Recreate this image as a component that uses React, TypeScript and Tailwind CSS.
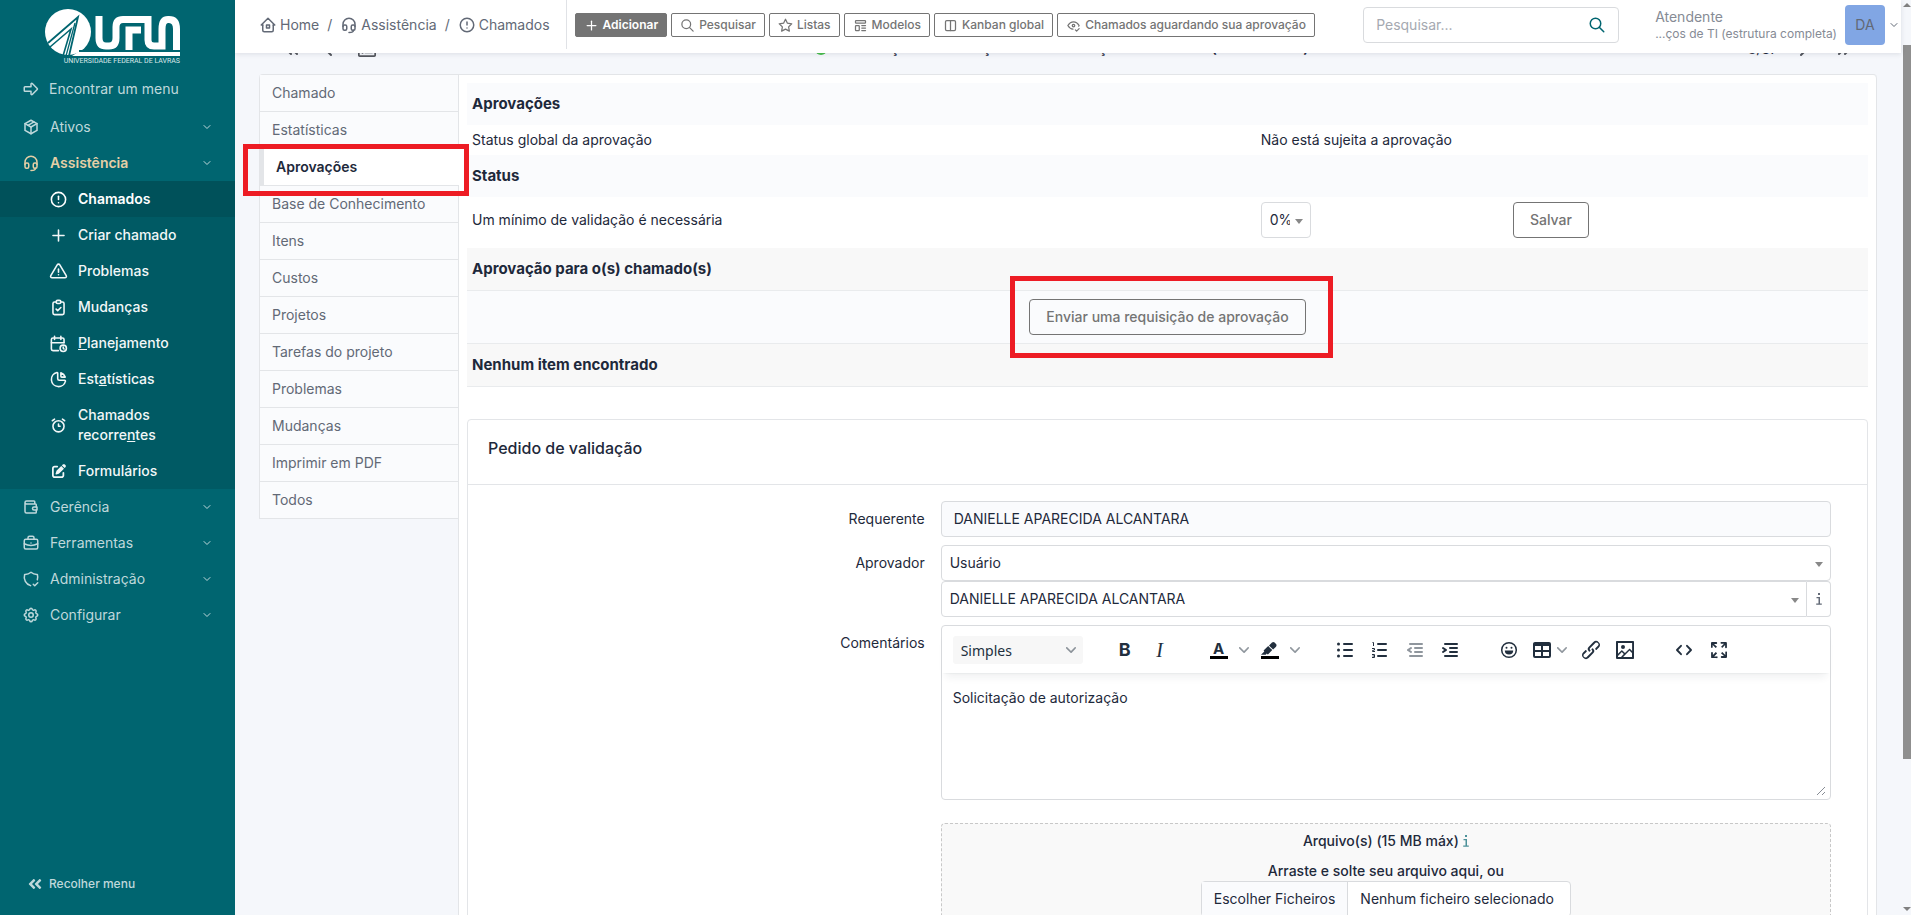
import React from 'react';
import {
  TbAlarm,
  TbAlertCircle,
  TbAlertTriangle,
  TbArrowBigRight,
  TbBriefcase,
  TbCalendarTime,
  TbChartPie,
  TbChevronDown,
  TbChevronLeft,
  TbChevronRight,
  TbChevronsLeft,
  TbChevronsRight,
  TbClipboardCheck,
  TbEyeCheck,
  TbHeadset,
  TbHome2,
  TbLayoutColumns,
  TbPackage,
  TbPlus,
  TbSearch,
  TbSettings,
  TbShieldCheck,
  TbStar,
  TbTemplate,
  TbWallet,
} from 'react-icons/tb';
import { FaAngleDoubleLeft, FaRegListAlt } from 'react-icons/fa';
import { FaPenToSquare } from 'react-icons/fa6';
import { clsx } from 'clsx';

type IconType = React.ComponentType<{ className?: string }>;

function FormsIcon({ className }: { className?: string }) {
  return (
    <span className={clsx('grid place-items-center', className)}>
      <FaPenToSquare className="size-[14px]" />
    </span>
  );
}

const subMenu: { icon: IconType; label: React.ReactNode; active?: boolean }[] = [
  { icon: TbAlertCircle, label: 'Chamados', active: true },
  { icon: TbPlus, label: 'Criar chamado' },
  { icon: TbAlertTriangle, label: 'Problemas' },
  { icon: TbClipboardCheck, label: 'Mudanças' },
  { icon: TbCalendarTime, label: <><u>P</u>lanejamento</> },
  { icon: TbChartPie, label: <>Est<u>a</u>tísticas</> },
  { icon: TbAlarm, label: <>Chamados recorre<u>n</u>tes</> },
  { icon: FormsIcon, label: 'Formulários' },
];

const lowerMenu: { icon: IconType; label: string }[] = [
  { icon: TbWallet, label: 'Gerência' },
  { icon: TbBriefcase, label: 'Ferramentas' },
  { icon: TbShieldCheck, label: 'Administração' },
  { icon: TbSettings, label: 'Configurar' },
];

const headerActions: { icon: IconType; label: string; primary?: boolean }[] = [
  { icon: TbPlus, label: 'Adicionar', primary: true },
  { icon: TbSearch, label: 'Pesquisar' },
  { icon: TbStar, label: 'Listas' },
  { icon: TbTemplate, label: 'Modelos' },
  { icon: TbLayoutColumns, label: 'Kanban global' },
  { icon: TbEyeCheck, label: 'Chamados aguardando sua aprovação' },
];

const tabs = [
  'Chamado',
  'Estatísticas',
  'Aprovações',
  'Base de Conhecimento',
  'Itens',
  'Custos',
  'Projetos',
  'Tarefas do projeto',
  'Problemas',
  'Mudanças',
  'Imprimir em PDF',
  'Todos',
];

function Logo() {
  return (
    <div className="flex flex-col items-end w-[135px] ml-[45px]">
      <svg viewBox="0 0 135 47" className="w-[135px] h-[47px]" fill="none" aria-hidden="true">
        <circle cx="23" cy="23" r="23" fill="#fff" />
        <path d="M33 43H135V47H27Z" fill="#fff" />
        <path d="M34 42H135" stroke="#006570" strokeWidth="2" />
        <path d="M3 34L33 8L24 47" stroke="#006570" strokeWidth="1.8" />
        <path d="M5 38L26 20L18 47" stroke="#006570" strokeWidth="1.6" />
        <path d="M30 14L21 47" stroke="#006570" strokeWidth="1.3" />
        <g stroke="#fff" strokeWidth="7">
          <path d="M54 7V29Q54 37 61 37H64Q71 37 71 29V18Q71 10.500 78 10.500H103V31Q103 37 109 37H117V20Q117 10.500 123 10.500H124Q131.500 10.500 131.500 20V41" />
          <path d="M84 41V21H96" />
        </g>
      </svg>
      <span className="text-[7px] leading-[10px] text-[#d9e8ea] font-['Roboto'] whitespace-nowrap">
        UNIVERSIDADE FEDERAL DE LAVRAS
      </span>
    </div>
  );
}

function MenuLink({ icon: Icon, label, active }: { icon: IconType; label: string; active?: boolean }) {
  return (
    <a
      href="#"
      className={clsx(
        'flex items-center h-9 px-[22px]',
        active ? 'text-[#e5cfa6] font-semibold' : 'text-[#bfd8db]'
      )}
    >
      <Icon className="size-[18px] mr-[10px]" />
      <span className="flex-1">{label}</span>
      <TbChevronDown className="size-3 text-[#bfd8db]" />
    </a>
  );
}

function Sidebar() {
  return (
    <aside className="w-[235px] shrink-0 flex flex-col bg-[#006570] pt-[9px]">
      <Logo />
      <a href="#" className="flex items-center h-9 mt-[5px] pl-[22px] text-[#bfd8db]">
        <TbArrowBigRight className="size-[18px] mr-[9px]" />
        Encontrar um menu
      </a>
      <nav className="mt-[2px]">
        <MenuLink icon={TbPackage} label="Ativos" />
        <MenuLink icon={TbHeadset} label="Assistência" active />
        <ul className="bg-[#005a64] text-[#f2f7f8] font-medium">
          {subMenu.map(({ icon: Icon, label, active }, index) => (
            <li key={index}>
              <a
                href="#"
                className={clsx(
                  'flex items-center min-h-9 py-2 pl-[49px] pr-14 leading-5',
                  active && 'bg-[#00515a] font-semibold text-white'
                )}
              >
                <Icon className="size-[19px] shrink-0 mr-[10px]" />
                <span>{label}</span>
              </a>
            </li>
          ))}
        </ul>
        {lowerMenu.map((item) => (
          <MenuLink key={item.label} icon={item.icon} label={item.label} />
        ))}
      </nav>
      <button className="flex items-center mt-auto mb-[23px] pl-[27px] text-xs font-medium text-[#bfd8db]">
        <FaAngleDoubleLeft className="size-4 mr-[6px]" />
        Recolher menu
      </button>
    </aside>
  );
}

function Header() {
  return (
    <header className="relative z-10 h-[53px] shrink-0 flex items-center bg-white pl-6 pb-[3px] text-[#626976] shadow-[0_1px_5px_rgba(30,41,59,0.12)]">
      <nav className="flex items-center gap-2">
        <a href="#" className="flex items-center gap-[3px]">
          <TbHome2 className="size-[18px]" /> Home
        </a>
        <span>/</span>
        <a href="#" className="flex items-center gap-[3px]">
          <TbHeadset className="size-[18px]" /> Assistência
        </a>
        <span>/</span>
        <a href="#" className="flex items-center gap-[3px]">
          <TbAlertCircle className="size-[18px]" /> Chamados
        </a>
      </nav>
      <div className="self-start h-[49px] w-px bg-[#e0e2e6] ml-4 mr-2" />
      <div className="flex items-center gap-1">
        {headerActions.map(({ icon: Icon, label, primary }) => (
          <button
            key={label}
            className={clsx(
              'flex items-center gap-1 h-6 px-2 rounded-[2px] border border-[#747474] text-xs whitespace-nowrap',
              primary ? 'bg-[#747474] text-white font-semibold' : 'text-[#747474] font-medium'
            )}
          >
            <Icon className="size-[15px]" />
            {label}
          </button>
        ))}
      </div>
      <div className="ml-auto mr-9 flex items-center w-64 h-9 px-3 rounded border border-[#d9dbde]">
        <input
          type="search"
          aria-label="Pesquisar"
          placeholder="Pesquisar..."
          className="flex-1 min-w-0 outline-none placeholder:text-[#a5a9b1]"
        />
        <TbSearch className="size-[18px] text-[#006570]" />
      </div>
      <div className="text-[#868b95] whitespace-nowrap">
        <div className="leading-[18px]">Atendente</div>
        <div className="text-xs leading-4">...ços de TI (estrutura completa)</div>
      </div>
      <button className="flex items-center gap-[3px] ml-2 pr-px">
        <span className="grid place-items-center size-10 rounded bg-[#81a6e4] text-[#626976]">DA</span>
        <TbChevronDown className="size-3" />
      </button>
    </header>
  );
}

// Navigation between tickets, partly scrolled under the header
function TicketBar() {
  return (
    <div className="flex items-center h-9 -mt-[22px] pl-[45px] pr-[45px] text-[#54575d]">
      <TbChevronsLeft className="size-6" />
      <TbChevronLeft className="size-6 ml-3" />
      <FaRegListAlt className="size-[18px] ml-[18px]" />
      <div className="flex items-center mx-auto gap-[10px]">
        <span className="size-3 rounded-full bg-[#49bf4d]" />
        <h1 className="pb-[3px] text-[15px] font-semibold text-[#1e293b] whitespace-nowrap">
          Solicitação Autorização da Manutenção do sistema (000028837)
        </h1>
      </div>
      <span className="text-[#1e293b]">8/37</span>
      <TbChevronRight className="size-6 ml-[14px]" />
      <TbChevronsRight className="size-6 ml-4" />
    </div>
  );
}

function Highlight({ className }: { className: string }) {
  return <span className={clsx('absolute z-20 border-[5px] border-[#ed1c24] pointer-events-none', className)} />;
}

function TabList() {
  return (
    <ul className="w-[199px] shrink-0 self-start border-l border-[#e3e5e8] rounded-tl text-[#626976]">
      {tabs.map((tab) => {
        const active = tab === 'Aprovações';
        return (
          <li key={tab} className="relative">
            <a
              href="#"
              className={clsx(
                'flex items-center h-[37px] border-b border-[#e3e5e8] px-3',
                active
                  ? 'bg-white border-l-4 -mr-px font-semibold text-[#1e293b]'
                  : 'bg-[#fafbfd]'
              )}
            >
              {tab}
            </a>
            {active && <Highlight className="-left-[17px] -right-[11px] -top-[5px] -bottom-[10px]" />}
          </li>
        );
      })}
    </ul>
  );
}

function Caret({ className }: { className?: string }) {
  return (
    <svg viewBox="0 0 8 5" className={clsx('w-2 h-[5px] fill-[#888] pointer-events-none', className)} aria-hidden="true">
      <path d="M0 0H8L4 5Z" />
    </svg>
  );
}

function InfoMark({ className }: { className?: string }) {
  return (
    <svg viewBox="0 0 6 12" className={clsx('w-[6px] h-3 fill-current', className)} aria-hidden="true">
      <path d="M2 0H4V2H2ZM0.500 4H4V10.500H5.800V11.700H0.200V10.500H2.500V5.200H0.500Z" />
    </svg>
  );
}

function SelectBox({ id, label, value, className }: { id: string; label?: string; value: string; className?: string }) {
  return (
    <div className={clsx('grid items-center h-9 border border-[#d9dbde]', className)}>
      <select id={id} aria-label={label} className="[grid-area:1/1] h-full w-full appearance-none bg-transparent pl-2 pr-5 pt-px outline-none">
        <option>{value}</option>
      </select>
      <Caret className="[grid-area:1/1] justify-self-end mr-[7px] mt-[4px]" />
    </div>
  );
}

function ApprovalTable() {
  return (
    <table className="w-full table-fixed text-left">
      <colgroup>
        <col className="w-[56.3%]" />
        <col className="w-[18%]" />
        <col />
      </colgroup>
      <tbody>
        <tr className="h-[42px] bg-[#fafbfd]">
          <th colSpan={3} className="px-[5px] text-[15px] font-bold">Aprovações</th>
        </tr>
        <tr className="h-[30px]">
          <td className="px-[5px]">Status global da aprovação</td>
          <td className="px-[5px]" colSpan={2}>Não está sujeita a aprovação</td>
        </tr>
        <tr className="h-[42px] bg-[#fafbfd]">
          <th colSpan={3} className="px-[5px] text-[15px] font-bold">Status</th>
        </tr>
        <tr className="h-[51px]">
          <td className="px-[5px] pb-[6px]">
            <label htmlFor="percent">Um mínimo de validação é necessária</label>
          </td>
          <td className="px-[5px] pb-[6px]">
            <SelectBox id="percent" value="0%" className="w-[50px] rounded" />
          </td>
          <td className="px-[5px] pb-[6px]">
            <button className="h-9 px-4 rounded border border-[#747474] text-[#747474] font-medium">Salvar</button>
          </td>
        </tr>
        <tr className="h-[42px] bg-[#f8f8f8] border-b border-[#e9ebed]">
          <th colSpan={3} className="px-[5px] text-[15px] font-bold">Aprovação para o(s) chamado(s)</th>
        </tr>
        <tr className="h-[53px] bg-[#fafbfd] border-b border-[#e9ebed]">
          <td colSpan={3} className="text-center">
            <span className="relative inline-block align-middle">
              <button className="h-9 px-4 rounded border border-[#747474] text-[#747474] font-medium">
                Enviar uma requisição de aprovação
              </button>
              <Highlight className="-left-[19px] -right-[27px] -top-[23px] -bottom-[23px]" />
            </span>
          </td>
        </tr>
        <tr className="h-[43px] bg-[#f8f8f8] border-b border-[#e9ebed]">
          <th colSpan={3} className="px-[5px] text-[15px] font-bold">Nenhum item encontrado</th>
        </tr>
      </tbody>
    </table>
  );
}

function ToolButton({ label, children, menu }: { label: string; children: React.ReactNode; menu?: boolean }) {
  return (
    <button type="button" aria-label={label} className={clsx('flex items-center h-7', menu ? 'px-1' : 'justify-center w-[34px]')}>
      {children}
      {menu && <ToolChevron />}
    </button>
  );
}

function ToolChevron() {
  return (
    <svg viewBox="0 0 10 10" className="size-[10px] mx-[3px] fill-[#222f3e]/50" aria-hidden="true">
      <path d="M8.7 2.2c.3-.3.8-.3 1 0 .4.4.4.9 0 1.2L5.7 7.800c-.3.3-.9.3-1.200 0L.2 3.400a.8.8 0 0 1 0-1.200c.3-.3.8-.3 1.100 0L5 6l3.700-3.800Z" />
    </svg>
  );
}

function ToolIcon({ children, className }: { children: React.ReactNode; className?: string }) {
  return (
    <svg viewBox="0 0 24 24" className={clsx('size-6 fill-[#222f3e]', className)} aria-hidden="true">
      {children}
    </svg>
  );
}

function EditorToolbar() {
  return (
    <div className="flex items-center gap-[25px] h-[47px] pl-[11px] pt-[2px] text-[#222f3e] shadow-[0_2px_2px_-2px_rgba(34,47,62,0.1),0_8px_8px_-4px_rgba(34,47,62,0.07)]">
      <div className="grid items-center w-[130px] h-7 rounded-[3px] bg-[#f7f7f7] font-['Noto_Sans']">
        <select aria-label="Formato" className="[grid-area:1/1] h-full w-full appearance-none bg-transparent pl-2 pt-[2px] outline-none">
          <option>Simples</option>
        </select>
        <div className="[grid-area:1/1] justify-self-end mr-1 pointer-events-none">
          <ToolChevron />
        </div>
      </div>
      <div className="flex gap-px">
        <ToolButton label="Negrito">
          <span className="font-['Inter'] text-lg font-bold">B</span>
        </ToolButton>
        <ToolButton label="Itálico">
          <span className="font-['Liberation_Serif'] text-xl italic">I</span>
        </ToolButton>
      </div>
      <div className="flex gap-px">
        <div className="flex items-center">
          <ToolButton label="Cor do texto">
            <span className="flex flex-col items-center w-[18px] border-b-[3px] border-black text-[15px] leading-[15px] font-bold">A</span>
          </ToolButton>
          <button type="button" aria-label="Escolher cor do texto"><ToolChevron /></button>
        </div>
        <div className="flex items-center">
          <ToolButton label="Cor de fundo">
            <ToolIcon>
              <path fill="#000" d="M3 18h18v3H3z" />
              <path d="M7.700 16.700H3l3.300-3.300-.7-.8L10.200 8l4 4.100-4 4.200c-.2.2-.6.2-.8 0l-.6-.7-1.100 1.100zm5-7.500L11 7.400l3-2.900a2 2 0 0 1 2.600 0L18 6c.7.7.7 2 0 2.700l-2.900 2.900-1.800-1.800-.5-.6" />
            </ToolIcon>
          </ToolButton>
          <button type="button" aria-label="Escolher cor de fundo"><ToolChevron /></button>
        </div>
      </div>
      <div className="flex gap-px">
        <ToolButton label="Lista não ordenada">
          <ToolIcon>
            <path d="M11 5h8a1 1 0 0 1 0 2h-8a1 1 0 0 1 0-2zm0 6h8a1 1 0 0 1 0 2h-8a1 1 0 0 1 0-2zm0 6h8a1 1 0 0 1 0 2h-8a1 1 0 0 1 0-2z" />
            <circle cx="5.500" cy="6" r="1.500" />
            <circle cx="5.500" cy="12" r="1.500" />
            <circle cx="5.500" cy="18" r="1.500" />
          </ToolIcon>
        </ToolButton>
        <ToolButton label="Lista ordenada">
          <ToolIcon>
            <path d="M10 17h8c.6 0 1 .4 1 1s-.4 1-1 1h-8a1 1 0 0 1 0-2zm0-6h8a1 1 0 0 1 0 2h-8a1 1 0 0 1 0-2zm0-6h8a1 1 0 1 1 0 2h-8a1 1 0 1 1 0-2z" />
            <path fill="none" stroke="#222f3e" d="M4.500 4.500H5.500V8M4 10.500H6.500V12L4.500 12.500V13.500H7M4 16.500H6.500V19.500H4M4.500 18H6.500" />
          </ToolIcon>
        </ToolButton>
        <ToolButton label="Diminuir recuo">
          <ToolIcon className="opacity-50">
            <path d="M7 5h12a1 1 0 0 1 0 2H7a1 1 0 1 1 0-2zm5 4h7a1 1 0 0 1 0 2h-7a1 1 0 0 1 0-2zm0 4h7a1 1 0 0 1 0 2h-7a1 1 0 0 1 0-2zm-5 4h12a1 1 0 0 1 0 2H7a1 1 0 0 1 0-2zm1.600-3.800a1 1 0 0 1-1.200 1.600l-3-2a1 1 0 0 1 0-1.600l3-2a1 1 0 0 1 1.200 1.600L6.800 12l1.800 1.200z" />
          </ToolIcon>
        </ToolButton>
        <ToolButton label="Aumentar recuo">
          <ToolIcon>
            <path d="M7 5h12a1 1 0 0 1 0 2H7a1 1 0 1 1 0-2zm5 4h7a1 1 0 0 1 0 2h-7a1 1 0 0 1 0-2zm0 4h7a1 1 0 0 1 0 2h-7a1 1 0 0 1 0-2zm-5 4h12a1 1 0 0 1 0 2H7a1 1 0 0 1 0-2zm-2.600-3.800L6.200 12l-1.800-1.200a1 1 0 0 1 1.200-1.600l3 2a1 1 0 0 1 0 1.600l-3 2a1 1 0 1 1-1.200-1.600z" />
          </ToolIcon>
        </ToolButton>
      </div>
      <div className="flex">
        <ToolButton label="Emojis">
          <ToolIcon>
            <circle cx="12" cy="12" r="7.300" fill="none" stroke="#222f3e" strokeWidth="1.500" />
            <circle cx="9.500" cy="9.800" r="1" />
            <circle cx="14.500" cy="9.800" r="1" />
            <path d="M7.800 12.500H16.200A4.200 4 0 0 1 7.800 12.500Z" />
          </ToolIcon>
        </ToolButton>
        <ToolButton label="Tabela" menu>
          <ToolIcon>
            <path fillRule="evenodd" d="M19 4a2 2 0 0 1 2 2v12a2 2 0 0 1-2 2H5a2 2 0 0 1-2-2V6c0-1.100.9-2 2-2h14zM5 14v4h6v-4H5zm14 0h-6v4h6v-4zm0-6h-6v4h6V8zM5 12h6V8H5v4z" />
          </ToolIcon>
        </ToolButton>
        <ToolButton label="Inserir link">
          <ToolIcon>
            <path d="M6.200 12.300a1 1 0 0 1 1.400 1.400l-2 2a2 2 0 1 0 2.600 2.800l4.800-4.800a1 1 0 0 0 0-1.400 1 1 0 1 1 1.400-1.300 2.900 2.900 0 0 1 0 4L9.600 20a3.900 3.900 0 0 1-5.500-5.500l2-2Zm11.600-.6a1 1 0 0 1-1.400-1.400l2-2a2 2 0 1 0-2.600-2.800L11 10.300a1 1 0 0 0 0 1.400A1 1 0 1 1 9.600 13a2.900 2.900 0 0 1 0-4L14.400 4a3.900 3.900 0 0 1 5.500 5.500l-2 2Z" />
          </ToolIcon>
        </ToolButton>
        <ToolButton label="Inserir imagem">
          <ToolIcon>
            <path d="M5 15.700l3.300-3.200c.3-.3.7-.3 1 0L12 15l4.100-4c.3-.4.8-.4 1 0l2 1.900V5H5v10.700zM5 18v1h3l2.800-2.900-2-2L5 17.900zm14-3l-2.500-2.400-6.400 6.500H19v-4zM4 3h16c.6 0 1 .4 1 1v16c0 .6-.4 1-1 1H4a1 1 0 0 1-1-1V4c0-.6.4-1 1-1zm6 8a2 2 0 1 0 0-4 2 2 0 0 0 0 4z" />
          </ToolIcon>
        </ToolButton>
      </div>
      <div className="flex gap-px">
        <ToolButton label="Código fonte">
          <ToolIcon>
            <path fill="none" stroke="#222f3e" strokeWidth="1.900" strokeLinecap="round" strokeLinejoin="round" d="M9 7.800L5 12L9 16.200M15 7.800L19 12L15 16.200" />
          </ToolIcon>
        </ToolButton>
        <ToolButton label="Tela cheia">
          <ToolIcon>
            <path d="M15.300 10l-1.200-1.300 2.900-3h-2.300a.9.9 0 1 1 0-1.700H19c.5 0 .9.400.9.900v4.400a.9.9 0 1 1-1.800 0V7l-2.900 3zm0 4l3 3v-2.300a.9.9 0 1 1 1.700 0V19c0 .5-.4.900-.9.900h-4.400a.9.900 0 1 1 0-1.800H17l-3-2.900 1.300-1.200zM10 15.400l-2.900 3h2.300a.9.900 0 1 1 0 1.700H5a.9.9 0 0 1-.9-.9v-4.400a.9.9 0 1 1 1.800 0V17l2.900-3 1.200 1.300zM8.700 10L5.700 7v2.300a.9.9 0 0 1-1.700 0V5c0-.5.4-.9.900-.9h4.400a.9.900 0 0 1 0 1.800H7l3 2.900-1.300 1.200z" />
          </ToolIcon>
        </ToolButton>
      </div>
    </div>
  );
}

function Editor() {
  return (
    <div className="h-[175px] flex flex-col rounded border border-[#d9dbde]">
      <EditorToolbar />
      <textarea
        id="comments"
        className="flex-1 resize-none bg-transparent px-[11px] pt-[15px] leading-5 outline-none"
        defaultValue="Solicitação de autorização"
      />
      <svg viewBox="0 0 10 10" className="size-[10px] self-end mr-1 mb-[3px] stroke-[#888d95]" aria-hidden="true">
        <path d="M1 9L9 1M6 9L9 6" />
      </svg>
    </div>
  );
}

function FormRow({ id, label, children }: { id: string; label: string; children: React.ReactNode }) {
  return (
    <div className="flex gap-4">
      <label htmlFor={id} className="flex-1 text-right pt-2 leading-5">
        {label}
      </label>
      <div className="w-[66%]">{children}</div>
    </div>
  );
}

function ValidationForm() {
  return (
    <section className="mt-8 rounded-t border border-[#e3e5e8]">
      <h2 className="h-[65px] pl-5 pt-4 border-b border-[#e3e5e8] text-base leading-6 font-medium">
        Pedido de validação
      </h2>
      <form className="flex flex-col gap-2 pt-4 pl-[14px] pr-9">
        <FormRow id="requester" label="Requerente">
          <input
            id="requester"
            readOnly
            defaultValue="DANIELLE APARECIDA ALCANTARA"
            className="block w-full h-9 px-3 rounded border border-[#d9dbde] bg-[#fafbfd] outline-none"
          />
        </FormRow>
        <FormRow id="approver-type" label="Aprovador">
          <SelectBox id="approver-type" value="Usuário" className="rounded" />
          <div className="flex">
            <SelectBox id="approver" label="Usuário aprovador" value="DANIELLE APARECIDA ALCANTARA" className="flex-1 rounded-l" />
            <button type="button" aria-label="Informações" className="grid place-items-center w-6 border border-l-0 border-[#d9dbde] rounded-r text-[#626976]">
              <InfoMark />
            </button>
          </div>
        </FormRow>
        <FormRow id="comments" label="Comentários">
          <Editor />
          <div className="mt-[23px] flex flex-col items-center rounded border border-dashed border-[#c8c8c8] bg-[#f9f9f9] pt-[7px] pb-6 font-medium">
            <div className="flex items-center gap-1 leading-5">
              Arquivo(s) (15 MB máx)
              <InfoMark className="text-[#4c9199]" />
            </div>
            <div className="mt-[10px] leading-5">Arraste e solte seu arquivo aqui, ou</div>
            <label className="flex h-9 rounded border border-[#d9dbde] bg-white font-normal">
              <input type="file" multiple className="sr-only" />
              <span className="flex items-center px-3 border-r border-[#d9dbde] bg-[#fafbfd]">Escolher Ficheiros</span>
              <span className="flex items-center pl-3 pr-4">Nenhum ficheiro selecionado</span>
            </label>
          </div>
        </FormRow>
      </form>
    </section>
  );
}

function Scrollbar() {
  return (
    <div className="w-[10px] shrink-0 flex flex-col items-end bg-[#f5f7fb]" aria-hidden="true">
      <svg viewBox="0 0 8 5" className="w-2 h-[5px] mt-[3px] mb-[37px] fill-[#808080]">
        <path d="M4 0L8 4H0Z" />
      </svg>
      <div className="w-2 h-[78%] bg-[#8f8f8f]" />
      <svg viewBox="0 0 8 5" className="w-2 h-[5px] mt-auto mb-[3px] fill-[#808080]">
        <path d="M0 0H8L4 4Z" />
      </svg>
    </div>
  );
}

export default function App() {
  return (
    <div className="flex h-screen overflow-hidden bg-[#f5f7fb] text-sm text-[#1e293b] font-['Inter',sans-serif]">
      <Sidebar />
      <div className="flex-1 min-w-0 flex flex-col">
        <Header />
        <main className="flex-1 min-h-0 overflow-hidden">
          <TicketBar />
          <div className="flex mt-[7px] ml-6 mr-6 border-t border-[#e3e5e8] rounded-t">
            <TabList />
            <div className="flex-1 min-w-0 border-x border-[#e3e5e8] rounded-tr bg-white pl-2 pr-2 pt-2 pb-10">
              <ApprovalTable />
              <ValidationForm />
            </div>
          </div>
        </main>
      </div>
      <Scrollbar />
    </div>
  );
}
